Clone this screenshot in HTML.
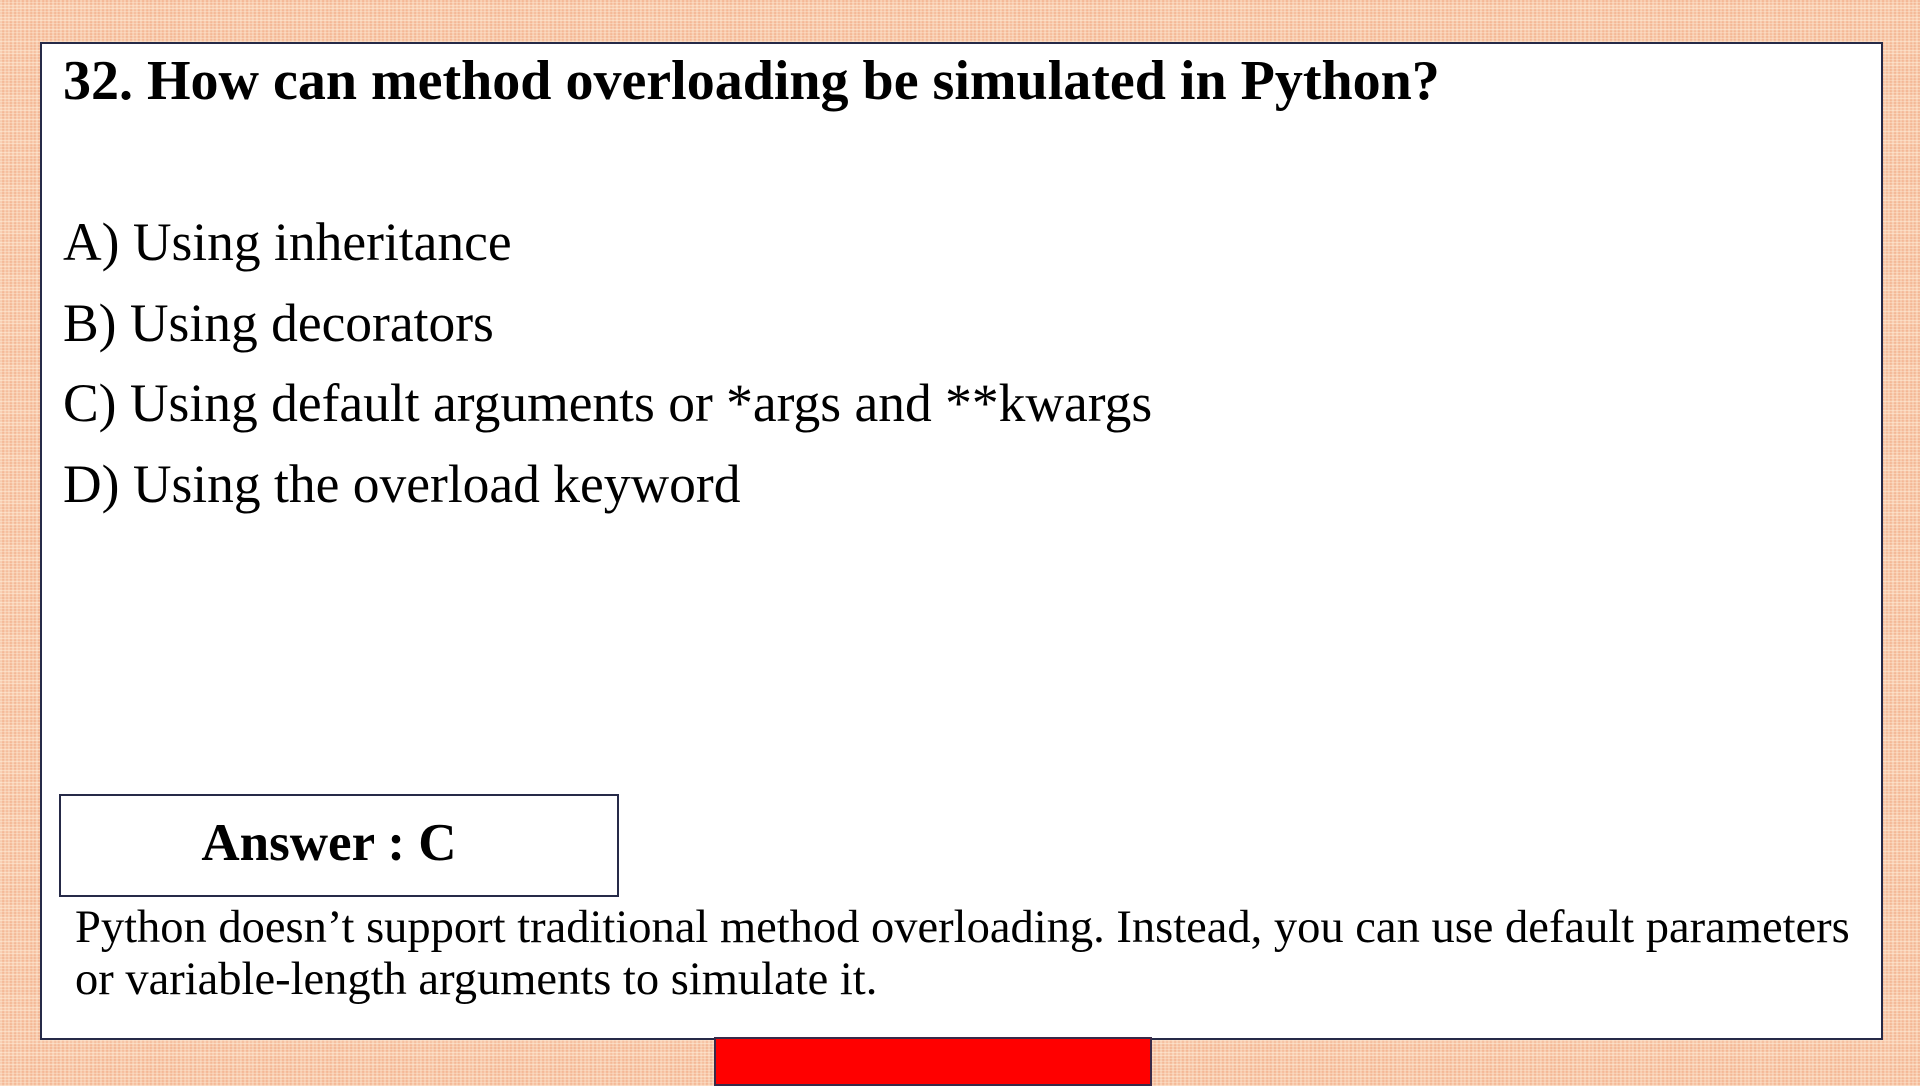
<!DOCTYPE html>
<html><head><style>
html,body{margin:0;padding:0;}
body{width:1920px;height:1080px;position:relative;overflow:hidden;
background-color:#f4b896;
background-image:repeating-linear-gradient(0deg,rgba(255,240,220,.55) 0 1px,transparent 1px 3px),repeating-linear-gradient(90deg,rgba(255,240,220,.4) 0 2px,transparent 2px 4px);
font-family:"Liberation Serif",serif;color:#000;}
.box{position:absolute;left:40px;top:42px;width:1839px;height:994px;background:#fff;border:2px solid #262a48;}
.t{position:absolute;white-space:nowrap;}
.title{left:63px;top:49px;font-size:56px;font-weight:bold;}
.opt{left:63px;font-size:53.5px;}
.ans{position:absolute;left:59px;top:794px;width:536px;padding-right:20px;height:99px;border:2px solid #262a48;background:#fff;text-align:center;font-weight:bold;font-size:53px;line-height:95px;}
.exp{left:75px;font-size:46.5px;}
.red{position:absolute;left:714px;top:1037px;width:434px;height:45px;background:#ff0000;border:2px solid #3a2a48;}
</style></head><body>
<div class="box"></div>
<div class="t title">32. How can method overloading be simulated in Python?</div>
<div class="t opt" style="top:211px">A) Using inheritance</div>
<div class="t opt" style="top:292px">B) Using decorators</div>
<div class="t opt" style="top:372px">C) Using default arguments or *args and **kwargs</div>
<div class="t opt" style="top:453px">D) Using the overload keyword</div>
<div class="ans">Answer : C</div>
<div class="t exp" style="top:901px">Python doesn’t support traditional method overloading. Instead, you can use default parameters</div>
<div class="t exp" style="top:953px">or variable-length arguments to simulate it.</div>
<div class="red"></div>
</body></html>
